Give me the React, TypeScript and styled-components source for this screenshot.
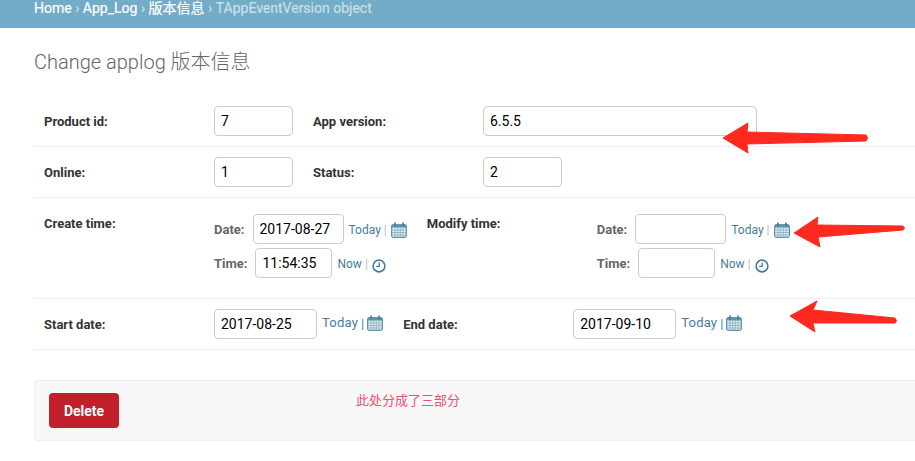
import styled, { createGlobalStyle } from 'styled-components';

const GlobalStyle = createGlobalStyle`
  html, body {
    margin: 0;
    padding: 0;
    background: #fff;
    overflow: hidden;
  }
  body {
    font-family: Roboto, "Noto Sans CJK SC", "Liberation Sans", sans-serif;
    font-size: 13px;
    color: #333;
  }
`;

const Page = styled.div`
  position: relative;
  width: 915px;
  height: 461px;
  overflow: hidden;
`;

const Breadcrumbs = styled.div`
  height: 28px;
  padding: 0 34px;
  background: #72acc7;
  color: #c8e0ea;
  font-size: 14px;
  line-height: 16px;
  white-space: nowrap;
  -webkit-text-stroke: 0.2px currentColor;
`;

const Crumb = styled.span`
  color: #fff;
`;

const Content = styled.div`
  padding-left: 34px;
`;

const Title = styled.h1`
  margin: 0;
  padding-top: 22px;
  height: 46px;
  font-size: 20px;
  line-height: 24px;
  font-weight: 300;
  color: #666;
  white-space: nowrap;
`;

const Row = styled.div<{ $tall?: boolean }>`
  display: flex;
  gap: 20px;
  height: ${props => (props.$tall ? '80px' : '30px')};
  padding: 10px;
  padding-top: ${props => (props.$tall ? '18px' : '10px')};
  padding-bottom: ${props => (props.$tall ? '2px' : '10px')};
  border-bottom: 1px solid #eee;
`;

const Field = styled.div`
  display: flex;
  flex: none;
`;

const Label = styled.label<{ $top?: boolean }>`
  flex: none;
  width: 170px;
  font-weight: 700;
  font-size: 13px;
  line-height: 16px;
  color: #333;
  padding-top: ${props => (props.$top ? '0' : '8px')};
`;

const Input = styled.div<{ $width: number }>`
  box-sizing: border-box;
  flex: none;
  width: ${props => props.$width}px;
  height: 30px;
  padding: 0 6px;
  border: 1px solid #ccc;
  border-radius: 4px;
  background: #fff;
  color: #000;
  font-size: 14px;
  line-height: 28px;
  white-space: nowrap;
`;

const SplitGroup = styled.div`
  display: flex;
  flex-direction: column;
  gap: 4px;
  margin-top: -2px;
`;

const SplitLine = styled.div`
  display: flex;
  align-items: center;
`;

const SplitLabel = styled.span`
  font-weight: 700;
  font-size: 13px;
  color: #666;
  margin-right: 8px;
`;

const Shortcuts = styled.span<{ $raised?: boolean }>`
  display: inline-flex;
  align-items: center;
  margin-left: 5px;
  font-size: ${props => (props.$raised ? '13px' : '12px')};
  color: #447e9b;
  white-space: nowrap;
  ${props => props.$raised && 'position: relative; top: -1px;'}
`;

const ShortcutText = styled.span<{ $raised?: boolean }>`
  margin-top: ${props => (props.$raised ? '0' : '2px')};
  margin-bottom: ${props => (props.$raised ? '2px' : '0')};
  letter-spacing: ${props => (props.$raised ? '0.2px' : '0')};
`;

const Divider = styled.span<{ $dark?: boolean }>`
  margin: ${props => (props.$dark ? '0 3px' : '2px 4px 0 3px')};
  color: ${props => (props.$dark ? '#447e9b' : '#bbb')};
`;

const SubmitRow = styled.div`
  box-sizing: border-box;
  position: relative;
  height: 61px;
  margin-top: 30px;
  padding: 12px 14px;
  background: #f8f8f8;
  border: 1px solid #eee;
  border-right: none;
  border-radius: 4px 0 0 4px;
`;

const DeleteButton = styled.button`
  display: block;
  width: 70px;
  height: 35px;
  padding: 0;
  border: none;
  border-radius: 4px;
  background: #c01f2b;
  color: #fff;
  font-family: inherit;
  font-size: 14px;
  font-weight: 700;
`;

const Note = styled.span`
  position: absolute;
  left: 321px;
  top: 12px;
  font-size: 13px;
  line-height: 16px;
  color: #f0506e;
  white-space: nowrap;
`;

const Annotations = styled.svg`
  position: absolute;
  left: 0;
  top: 0;
  pointer-events: none;
`;

function CalendarIcon({ low }: { low?: boolean }) {
  return (
    <svg width="16" height="16" viewBox="0 0 16 16" fill="none" style={{ flex: 'none', marginTop: low ? 2 : 0 }}>
      <rect x="0.7" y="2.7" width="14.6" height="12.6" rx="1" fill="#e2edf2" stroke="#447e9b" strokeWidth="1" />
      <rect x="1" y="3" width="14" height="2.6" fill="#5f93ac" />
      <path d="M4 1v3M12 1v3" stroke="#447e9b" strokeWidth="1.6" strokeLinecap="round" />
      <path d="M1 8h14M1 10.5h14M1 13h14M4 6v9M6.7 6v9M9.3 6v9M12 6v9" stroke="#6f9db3" strokeWidth="0.6" />
    </svg>
  );
}

function ClockIcon() {
  return (
    <svg width="14" height="14" viewBox="0 0 14 14" fill="none" style={{ flex: 'none', marginTop: 6 }}>
      <circle cx="7" cy="7" r="5.9" stroke="#447e9b" strokeWidth="1.6" />
      <path d="M7.2 3.4v4H4.2" stroke="#447e9b" strokeWidth="1.3" />
    </svg>
  );
}

function DateTimeField({ label, date, time, dateWidth, timeWidth }: {
  label: string;
  date: string;
  time: string;
  dateWidth: number;
  timeWidth: number;
}) {
  return (
    <Field>
      <Label $top>{label}</Label>
      <SplitGroup>
        <SplitLine>
          <SplitLabel>Date:</SplitLabel>
          <Input $width={dateWidth}>{date}</Input>
          <Shortcuts>
            <ShortcutText>Today</ShortcutText>
            <Divider>|</Divider>
            <CalendarIcon low />
          </Shortcuts>
        </SplitLine>
        <SplitLine>
          <SplitLabel>Time:</SplitLabel>
          <Input $width={timeWidth}>{time}</Input>
          <Shortcuts>
            <ShortcutText>Now</ShortcutText>
            <Divider>|</Divider>
            <ClockIcon />
          </Shortcuts>
        </SplitLine>
      </SplitGroup>
    </Field>
  );
}

function DateField({ label, value }: { label: string; value: string }) {
  return (
    <Field>
      <Label>{label}</Label>
      <Input $width={103}>{value}</Input>
      <Shortcuts $raised>
        <ShortcutText $raised>Today</ShortcutText>
        <Divider $dark>|</Divider>
        <CalendarIcon />
      </Shortcuts>
    </Field>
  );
}

export default function App() {
  return (
    <Page>
      <GlobalStyle />
      <Breadcrumbs>
        <Crumb>Home</Crumb> › <Crumb>App_Log</Crumb> › <Crumb>版本信息</Crumb> › TAppEventVersion object
      </Breadcrumbs>
      <Content>
        <Title>Change applog 版本信息</Title>
        <Row>
          <Field>
            <Label>Product id:</Label>
            <Input $width={79}>7</Input>
          </Field>
          <Field>
            <Label>App version:</Label>
            <Input $width={274}>6.5.5</Input>
          </Field>
        </Row>
        <Row>
          <Field>
            <Label>Online:</Label>
            <Input $width={79}>1</Input>
          </Field>
          <Field>
            <Label>Status:</Label>
            <Input $width={79}>2</Input>
          </Field>
        </Row>
        <Row $tall>
          <DateTimeField label="Create time:" date="2017-08-27" time="11:54:35" dateWidth={91} timeWidth={77} />
          <DateTimeField label="Modify time:" date="" time="" dateWidth={91} timeWidth={77} />
        </Row>
        <Row>
          <DateField label="Start date:" value="2017-08-25" />
          <DateField label="End date:" value="2017-09-10" />
        </Row>
        <SubmitRow>
          <DeleteButton>Delete</DeleteButton>
          <Note>此处分成了三部分</Note>
        </SubmitRow>
      </Content>
      <Annotations width="915" height="461" viewBox="0 0 915 461">
        <g fill="#ff2a1f" stroke="#ff2a1f" strokeWidth="1" strokeLinejoin="round">
          <path d="M723 138 L748 123 L747 132 L866 135 Q869 138 866 141 L747 144 L748 153 Z" />
          <path d="M794 233 L818 217 L817 225 L903 226 Q906 228 903 230 L818 237 L820 247 Z" />
          <path d="M790 316 L817 301 L813 310 L895 318 Q898 321 895 323 L813 323 L815 332 Z" />
        </g>
      </Annotations>
    </Page>
  );
}
